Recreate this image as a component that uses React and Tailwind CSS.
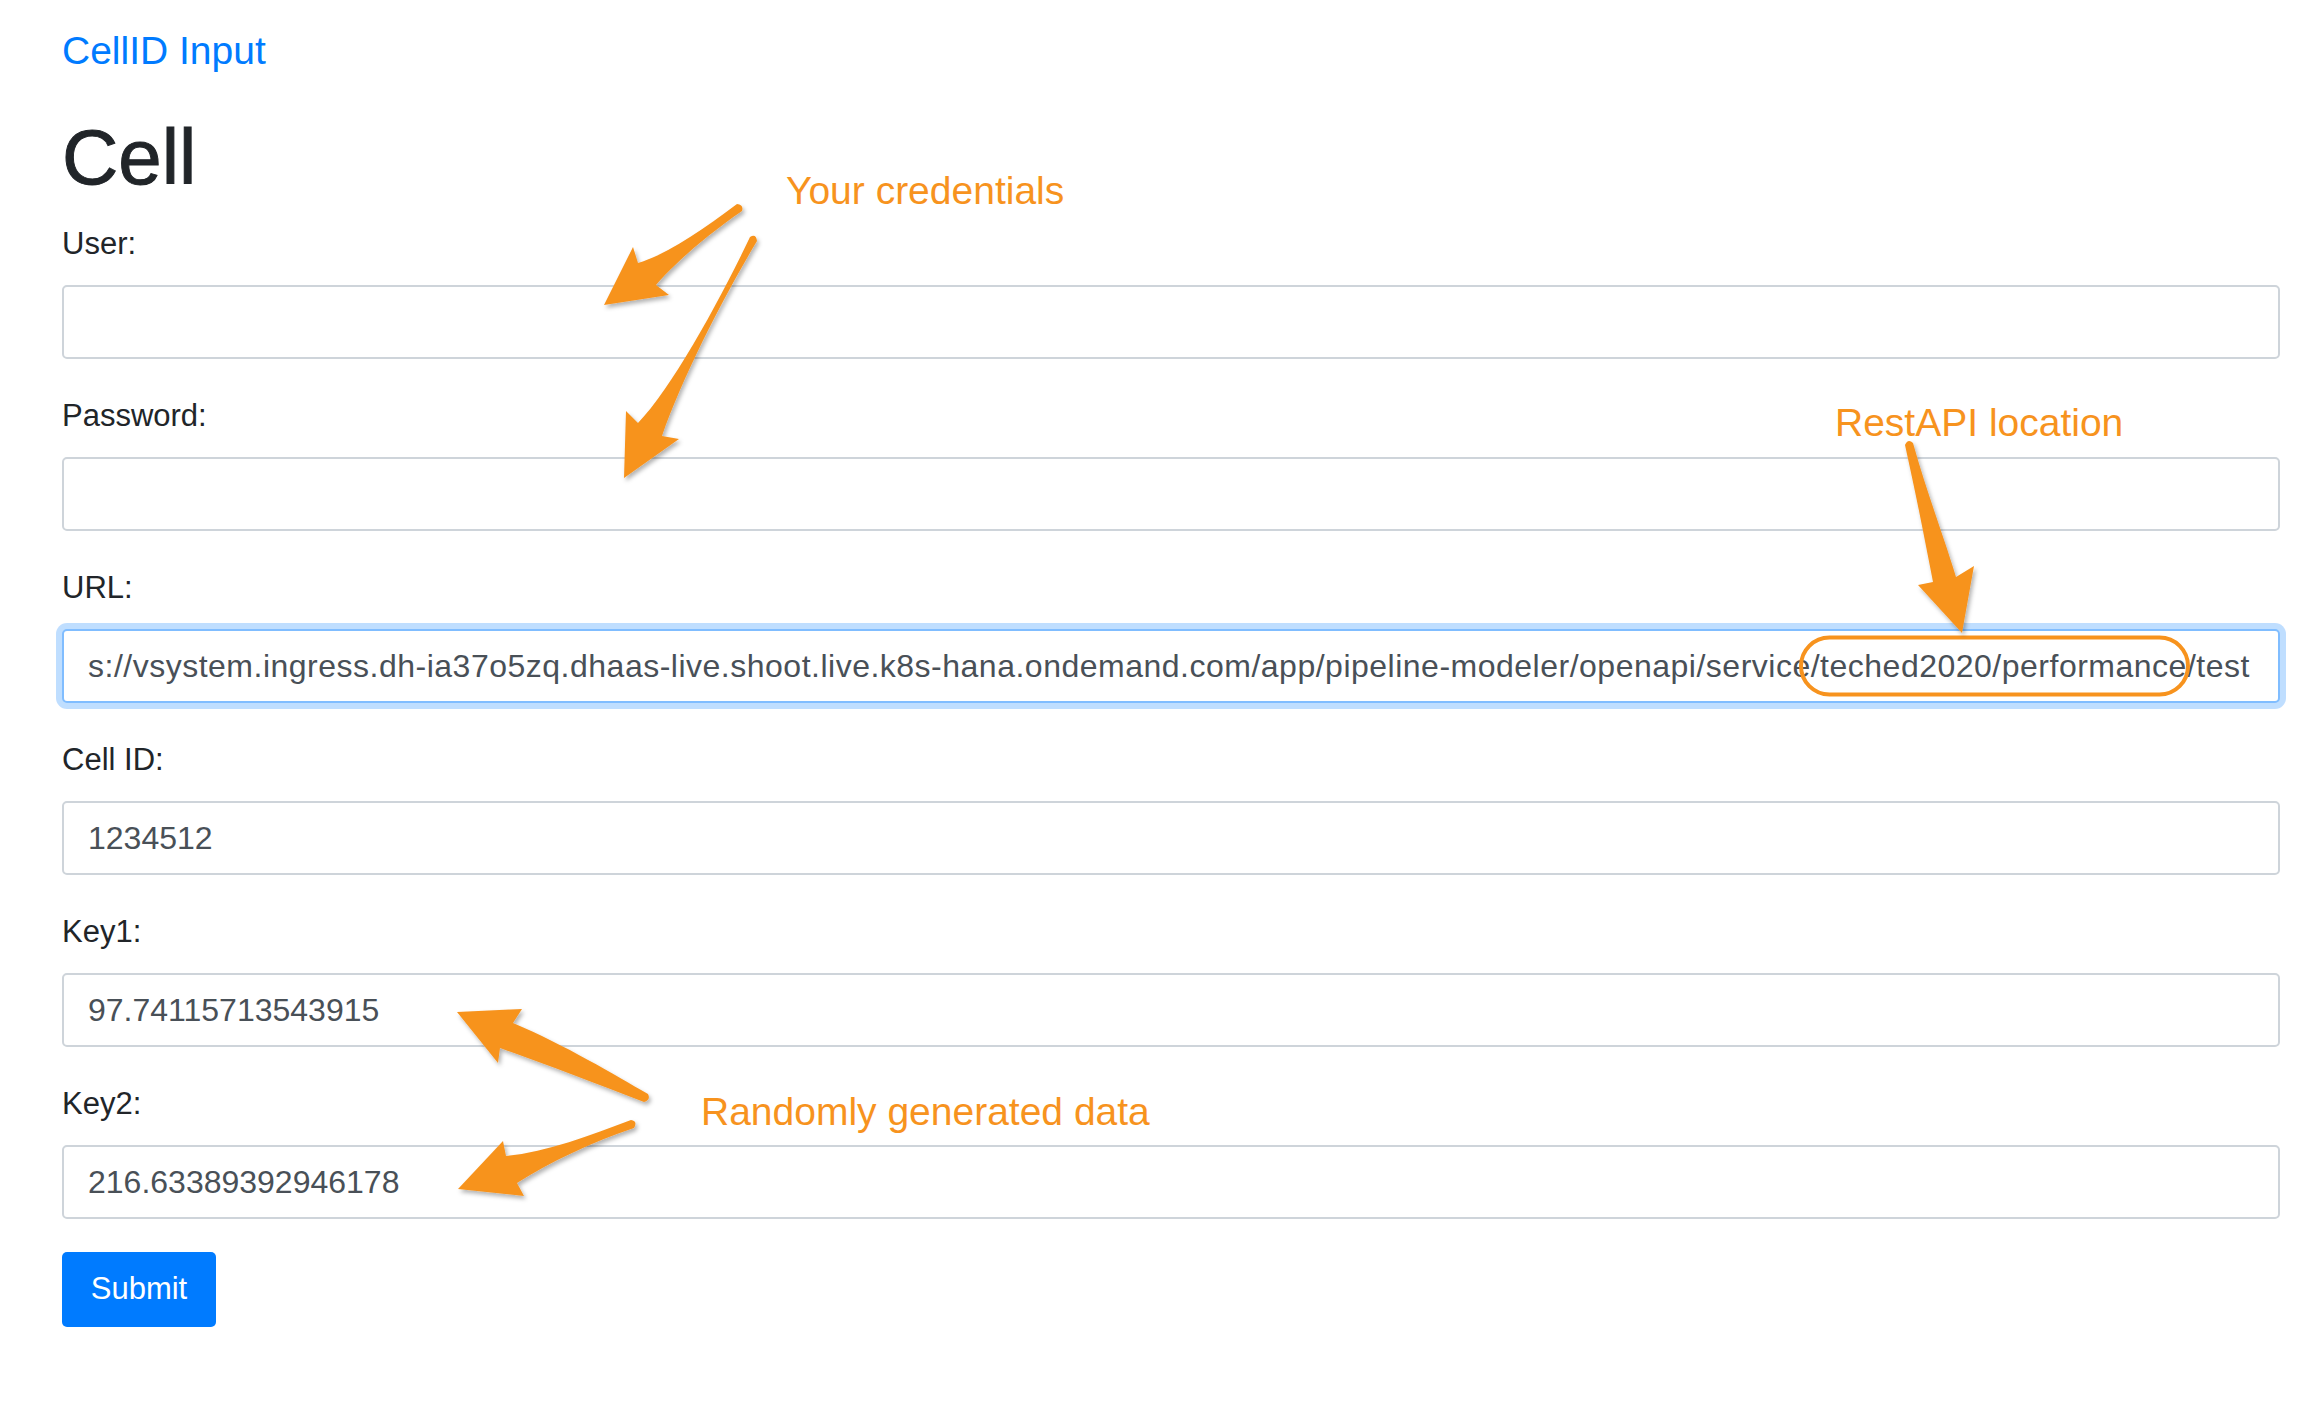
const ORANGE = "#f7931e";

const fields = [
  { label: "User:", value: "" },
  { label: "Password:", value: "" },
  { label: "URL:", url: true },
  { label: "Cell ID:", value: "1234512" },
  { label: "Key1:", value: "97.74115713543915" },
  { label: "Key2:", value: "216.63389392946178" },
];

function UrlField() {
  return (
    <div className="flex items-center h-[74px] w-full rounded-[5px] border-2 border-[#80bdff] bg-white pl-[24px] shadow-[0_0_0_6px_rgba(0,123,255,0.25)] overflow-hidden whitespace-nowrap text-[32px] tracking-[0.5px] text-[#495057]">
      <span>s://vsystem.ingress.dh-ia37o5zq.dhaas-live.shoot.live.k8s-hana.ondemand.com/app/pipeline-modeler/openapi/service</span>
      <span className="relative">
        /teched2020/performance
        <span className="absolute left-[-12px] right-[-3px] top-1/2 -translate-y-1/2 h-[61px] rounded-full border-[4px] border-[#f7931e]" />
      </span>
      <span>/test</span>
    </div>
  );
}

function Arrows() {
  return (
    <svg className="absolute inset-0 pointer-events-none" width="2304" height="1418" viewBox="0 0 2304 1418">
      <defs>
        <filter id="sh" x="-20%" y="-20%" width="140%" height="140%">
          <feDropShadow dx="2" dy="3" stdDeviation="2" floodColor="#000" floodOpacity="0.3" />
        </filter>
      </defs>
      <g fill={ORANGE} filter="url(#sh)">
        {/* your credentials -> user */}
        <path d="M737 204 C702 230 668 254 638 263 L633 247 L604 305 L669 295 L656 285 C676 262 706 236 742 211 Q744 205 737 204 Z" />
        {/* your credentials -> password */}
        <path d="M750 237 C720 300 672 388 638 423 L626 411 L624 478 L679 439 L662 436 C682 378 722 300 757 241 Q756 233 750 237 Z" />
        {/* restapi */}
        <path d="M1905 445 C1915 490 1925 540 1933 582 L1918 585 L1962 633 L1974 566 L1956 577 C1945 540 1926 490 1913 443 Q1908 438 1905 445 Z" />
        {/* random -> key1 */}
        <path d="M648 1094 C615 1075 565 1045 513 1023 L522 1009 L457 1012 L498 1063 L500 1048 C548 1065 600 1085 644 1102 Q651 1100 648 1094 Z" />
        {/* random -> key2 */}
        <path d="M631 1120 C590 1135 548 1152 506 1156 L503 1141 L458 1189 L524 1196 L517 1183 C550 1162 592 1142 634 1128 Q638 1121 631 1120 Z" />
      </g>
    </svg>
  );
}

export default function App() {
  return (
    <div className="relative w-[2304px] min-h-[1418px] bg-white font-['Liberation_Sans',Arial,sans-serif]">
      <div className="pl-[62px] pr-[24px] pt-[22px]">
        <a className="block text-[39px] leading-[58px] text-[#007bff]">CellID Input</a>
        <h1 className="mt-[30px] mb-[16px] text-[78px] leading-[94px] font-medium text-[#212529] [-webkit-text-stroke:1px_#212529]">Cell</h1>

        <form>
          {fields.map((f, i) => (
            <div key={i} className="mb-[33px]">
              <label className="block text-[31px] leading-[48px] mb-[17px] text-[#212529]">{f.label}</label>
              {f.url ? (
                <UrlField />
              ) : (
                <input
                  readOnly
                  value={f.value}
                  className="block h-[74px] w-full rounded-[5px] border-2 border-[#ced4da] bg-white px-[24px] text-[32px] text-[#495057] outline-none"
                />
              )}
            </div>
          ))}
          <button type="button" className="w-[154px] h-[75px] rounded-[5px] bg-[#007bff] text-white text-[31px]">
            Submit
          </button>
        </form>
      </div>

      <Arrows />

      <div className="absolute left-[786px] top-[171px] text-[39px] leading-none whitespace-nowrap" style={{ color: ORANGE }}>
        Your credentials
      </div>
      <div className="absolute left-[1835px] top-[403px] text-[39px] leading-none whitespace-nowrap" style={{ color: ORANGE }}>
        RestAPI location
      </div>
      <div className="absolute left-[701px] top-[1092px] text-[39px] leading-none whitespace-nowrap" style={{ color: ORANGE }}>
        Randomly generated data
      </div>
    </div>
  );
}
